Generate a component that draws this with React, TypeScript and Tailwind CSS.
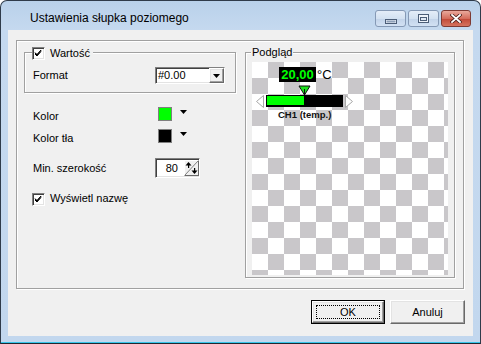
import React from "react";

const ui = "font-['Liberation_Sans',Arial,sans-serif] text-[11px] text-black";
const etched = "border border-[#a0a0a0] shadow-[inset_1px_1px_0_#fff,1px_1px_0_#fff]";
const sunken =
  "border border-t-[#808080] border-l-[#808080] border-b-white border-r-white shadow-[inset_1px_1px_0_#404040,inset_-1px_-1px_0_#e3e3e3]";
const raised =
  "border border-t-white border-l-white border-b-[#696969] border-r-[#696969] shadow-[inset_-1px_-1px_0_#a0a0a0,inset_1px_1px_0_#e3e3e3]";

const CheckBox = () => (
  <div className={`w-[13px] h-[13px] bg-white flex items-center justify-center ${sunken}`}>
    <svg width="9" height="9" viewBox="0 0 9 9">
      <path d="M1 4 L3 6 L7 1.5 M1 5 L3 7 L7 2.5 M1 3.5 L3 5.5 L7 1" stroke="#000" strokeWidth="1" fill="none" />
    </svg>
  </div>
);

const SmallDown = () => (
  <svg width="7" height="4" viewBox="0 0 7 4">
    <polygon points="0,0 7,0 3.5,4" fill="#000" />
  </svg>
);

const Swatch = ({ color }: { color: string }) => (
  <div className="flex items-center">
    <div className={`w-[14px] h-[14px] border border-[#7f7f7f] ${color}`} />
    <div className="ml-[8px] -mt-[4px]">
      <SmallDown />
    </div>
  </div>
);

const Checker = () => {
  const cells = Array.from({ length: 13 * 14 });
  return (
    <div className="relative mt-[9px] ml-[6px] w-[196px] h-[213px] overflow-hidden">
      <div className="grid grid-cols-[repeat(13,16px)] auto-rows-[16px]">
        {cells.map((_, i) => {
          const r = Math.floor(i / 13);
          const c = i % 13;
          return <div key={i} className={(r + c) % 2 ? "bg-[#c9c7ca]" : "bg-white"} />;
        })}
      </div>

      {/* value */}
      <div className="absolute left-[27px] top-[5px] w-[37px] h-[15px] bg-black flex items-center justify-center font-['Liberation_Sans',Arial,sans-serif] font-bold text-[13px] leading-none text-[#00ff00]">
        20,00
      </div>
      <div className="absolute left-[65px] top-[5px] font-['Liberation_Sans',Arial,sans-serif] text-[13px] leading-[15px] text-black">
        °C
      </div>

      {/* marker */}
      <svg className="absolute left-[46px] top-[23px]" width="13" height="11" viewBox="0 0 13 11">
        <polygon points="1,1 12,1 6.5,10" fill="#1fe11f" stroke="#111" strokeWidth="1" />
        <line x1="6.5" y1="4" x2="6.5" y2="10" stroke="#111" strokeWidth="1" />
      </svg>

      {/* bar */}
      <svg className="absolute left-[4px] top-[33px]" width="8" height="13" viewBox="0 0 8 13">
        <polygon points="7.5,0.5 0.5,6.5 7.5,12.5" fill="#fff" stroke="#a8a8a8" strokeWidth="1" />
      </svg>
      <div className="absolute left-[14px] top-[33px] w-[77px] h-[12px] bg-black">
        <div className="ml-[1px] mt-[1px] w-[37px] h-[9px] bg-[#00ff00]" />
      </div>
      <svg className="absolute left-[93px] top-[33px]" width="8" height="13" viewBox="0 0 8 13">
        <polygon points="0.5,0.5 7.5,6.5 0.5,12.5" fill="#fff" stroke="#a8a8a8" strokeWidth="1" />
      </svg>

      <div className="absolute left-[26px] top-[47px] font-['Liberation_Sans',Arial,sans-serif] font-bold text-[9.5px] leading-[11px] text-[#111]">
        CH1 (temp.)
      </div>
    </div>
  );
};

const CaptionButton = ({ kind }: { kind: "min" | "max" | "close" }) => {
  if (kind === "close")
    return (
      <div className="w-[30px] h-[17px] rounded-[3px] border border-[#7e3a33] bg-[linear-gradient(#e9a99c,#d46d5c_50%,#c24b3a_55%,#d5735f)] flex items-center justify-center">
        <svg width="12" height="9" viewBox="0 0 12 9">
          <path d="M2 1 L10 8 M10 1 L2 8" stroke="#4a1f1a" strokeWidth="3.4" strokeLinecap="square" />
          <path d="M2 1 L10 8 M10 1 L2 8" stroke="#fff" strokeWidth="1.8" strokeLinecap="square" />
        </svg>
      </div>
    );
  return (
    <div className="w-[31px] h-[17px] rounded-[3px] border border-[#8599b5] bg-[linear-gradient(#e4edf8,#d3e1f1_50%,#c3d4ea_55%,#d2e1f3)] flex items-center justify-center">
      {kind === "min" ? (
        <svg width="12" height="5" viewBox="0 0 12 5" className="mt-[5px]">
          <rect x="0.5" y="0.5" width="11" height="4" fill="#eef3fa" stroke="#4b5d77" />
          <rect x="1.5" y="1.5" width="9" height="2" fill="#8ea0b8" />
        </svg>
      ) : (
        <svg width="11" height="9" viewBox="0 0 11 9">
          <rect x="0.5" y="0.5" width="10" height="8" fill="#eef3fa" stroke="#4b5d77" />
          <rect x="2.5" y="3.5" width="6" height="3" fill="#dfe8f4" stroke="#4b5d77" />
        </svg>
      )}
    </div>
  );
};

const SpinButton = () => (
  <div className="w-[15px] h-[16px] bg-[#f0f0f0] border border-t-white border-l-white border-b-[#696969] border-r-[#696969]">
    <svg width="13" height="14" viewBox="0 0 13 14">
      <line x1="0" y1="14" x2="13" y2="0" stroke="#808080" strokeWidth="1" />
      <polygon points="3.5,1 0.5,4.5 6.5,4.5" fill="#000" />
      <rect x="3" y="4" width="1.2" height="3" fill="#000" />
      <polygon points="9.5,13 6.5,9.5 12.5,9.5" fill="#000" />
      <rect x="9" y="7" width="1.2" height="3" fill="#000" />
    </svg>
  </div>
);

export default function App() {
  return (
    <div className={`w-[481px] h-[344px] flex flex-col rounded-t-[7px] border border-[#2f3b4a] border-b-[#1f2730] bg-[linear-gradient(#b9d1ea,#c5d9ef_29px,#c2d7ee)] shadow-[inset_0_-1px_0_#38c5ea] overflow-hidden ${ui}`}>
      {/* title bar */}
      <div className="h-[29px] flex items-start">
        <div className="pl-[29px] pt-[10px] text-[12px] leading-[14px] text-black">
          Ustawienia słupka poziomego
        </div>
        <div className="ml-auto mr-[9px] mt-[9px] flex gap-[2px]">
          <CaptionButton kind="min" />
          <CaptionButton kind="max" />
          <CaptionButton kind="close" />
        </div>
      </div>

      {/* client */}
      <div className="mx-[7px] h-[306px] bg-[#f0f0f0] flex flex-col">
        <div className={`mt-[10px] ml-[8px] w-[448px] h-[249px] ${etched}`}>
          <div className="flex pt-[11px] pl-[7px]">
            {/* left column */}
            <div className="w-[212px] flex flex-col">
              <div className={`relative h-[41px] ${etched}`}>
                <div className="absolute left-[7px] top-[-6px] flex items-center gap-[5px] pr-[3px] bg-[#f0f0f0]">
                  <CheckBox />
                  <span className="leading-[13px]">Wartość</span>
                </div>
                <div className="flex items-center pt-[14px] pl-[8px]">
                  <div className="w-[122px]">Format</div>
                  <div className={`w-[70px] h-[17px] bg-white flex items-center ${sunken}`}>
                    <span className="pl-[2px] flex-1">#0.00</span>
                    <div className={`w-[15px] h-[15px] bg-[#f0f0f0] flex items-center justify-center ${raised}`}>
                      <SmallDown />
                    </div>
                  </div>
                </div>
              </div>

              <div className="mt-[14px] pl-[9px] flex items-center h-[14px]">
                <div className="w-[125px] pt-[4px]">Kolor</div>
                <Swatch color="bg-[#00ff00]" />
              </div>
              <div className="mt-[8px] pl-[9px] flex items-center h-[14px]">
                <div className="w-[125px] pt-[4px]">Kolor tła</div>
                <Swatch color="bg-black" />
              </div>
              <div className="mt-[15px] pl-[9px] flex items-center h-[20px]">
                <div className="w-[122px]">Min. szerokość</div>
                <div className={`w-[45px] h-[20px] bg-white flex items-center ${sunken}`}>
                  <span className="flex-1 text-right pr-[6px]">80</span>
                  <SpinButton />
                </div>
              </div>
              <div className="mt-[15px] pl-[8px] flex items-center gap-[5px]">
                <CheckBox />
                <span className="-mt-[3px]">Wyświetl nazwę</span>
              </div>
            </div>

            {/* preview */}
            <div className={`relative ml-[9px] w-[210px] h-[226px] ${etched}`}>
              <div className="absolute left-[5px] top-[-8px] px-[1px] bg-[#f0f0f0] leading-[14px]">Podgląd</div>
              <Checker />
            </div>
          </div>
        </div>

        {/* buttons */}
        <div className="mt-[11px] pr-[8px] flex justify-end gap-[5px]">
          <div className="w-[74px] h-[24px] border border-black">
            <div className={`relative w-full h-full bg-[#f0f0f0] flex items-center justify-center ${raised}`}>
              <div className="absolute inset-[3px] border border-dotted border-black" />
              OK
            </div>
          </div>
          <div className={`w-[75px] h-[24px] bg-[#f0f0f0] flex items-center justify-center ${raised}`}>Anuluj</div>
        </div>
      </div>
    </div>
  );
}
